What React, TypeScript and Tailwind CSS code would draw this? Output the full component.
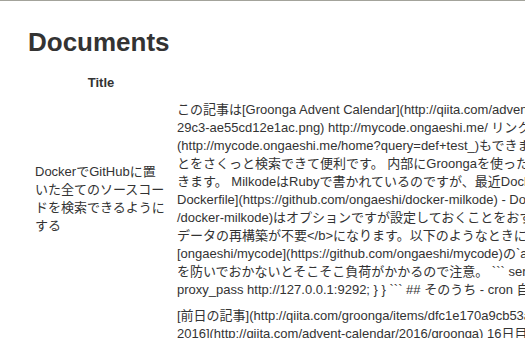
const lines = [
  "この記事は[Groonga Advent Calendar](http://qiita.com/advent-calendar/2016/groonga)の15日目の記事です。",
  "29c3-ae55cd12e1ac.png) http://mycode.ongaeshi.me/ リンク先のページで",
  "(http://mycode.ongaeshi.me/home?query=def+test_)もできます。",
  "とをさくっと検索できて便利です。 内部にGroongaを使った全文検索",
  "きます。 MilkodeはRubyで書かれているのですが、最近Dockerに",
  "Dockerfile](https://github.com/ongaeshi/docker-milkode) - Docker",
  "/docker-milkode)はオプションですが設定しておくことをおすすめ",
  "データの再構築が不要</b>になります。以下のようなときに",
  "[ongaeshi/mycode](https://github.com/ongaeshi/mycode)の`app",
  "を防いでおかないとそこそこ負荷がかかるので注意。 ``` server {",
  "proxy_pass http://127.0.0.1:9292; } } ``` ## そのうち - cron 自動",
];

const lines2 = [
  "[前日の記事](http://qiita.com/groonga/items/dfc1e170a9cb53a1b2c3)",
  "2016](http://qiita.com/advent-calendar/2016/groonga) 16日目の記事",
];

export default function App() {
  return (
    <div
      className="w-[525px] h-[338px] overflow-hidden bg-white border-t border-[#a3a39b] text-[#333] text-[13px] leading-[18px]"
      style={{ fontFamily: '"Liberation Sans", "Noto Sans CJK JP", sans-serif' }}
    >
      <div className="pl-[28px] pt-[27px]">
        <h1 className="text-[26px] leading-[29px] font-bold">Documents</h1>

        <div className="mt-[14px] w-[720px]">
          {/* header */}
          <div className="flex">
            <div className="w-[144px] pl-[7px] pr-[5px] py-[3px] text-center font-bold">Title</div>
          </div>

          {/* row */}
          <div className="flex mt-[3px]">
            <div className="w-[144px] shrink-0 pl-[7px] pr-[5px] pt-[65px]">
              DockerでGitHubに置いた全てのソースコードを検索できるようにする
            </div>
            <div className="pl-[5px] pt-[3px]">
              <div className="whitespace-nowrap">
                {lines.map((l, i) => (
                  <div key={i}>{l}</div>
                ))}
              </div>
              <div className="whitespace-nowrap mt-[8px]">
                {lines2.map((l, i) => (
                  <div key={i}>{l}</div>
                ))}
              </div>
            </div>
          </div>
        </div>
      </div>
    </div>
  );
}
